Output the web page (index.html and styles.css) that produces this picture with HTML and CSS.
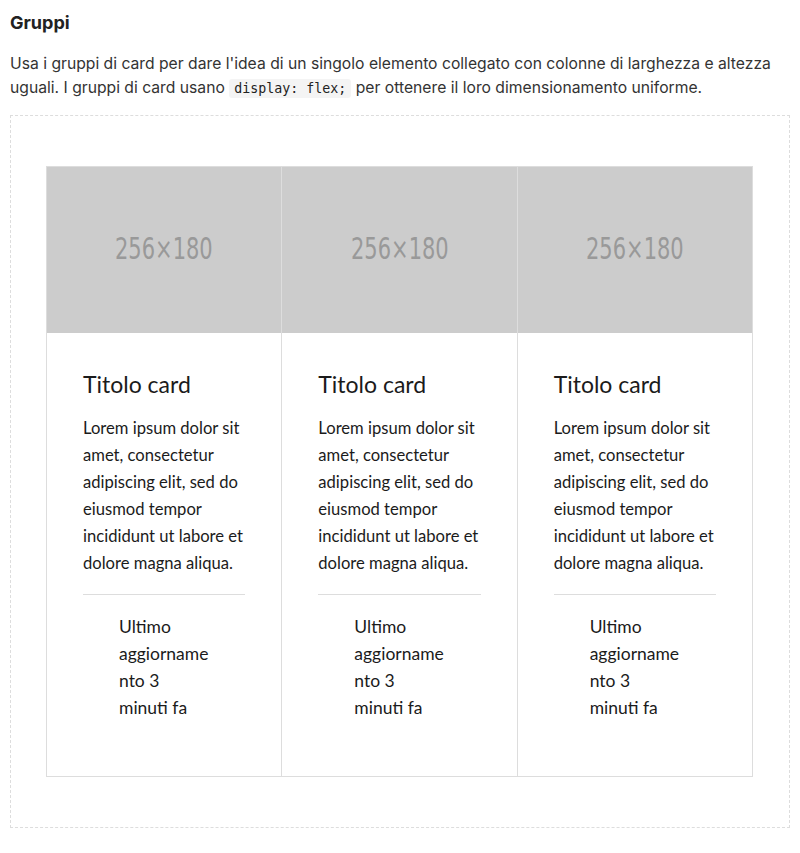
FILE: index.html
```html
<!DOCTYPE html>
<html lang="it">
<head>
<meta charset="utf-8">
<link rel="stylesheet" href="styles.css">
</head>
<body>
<h3 class="title">Gruppi</h3>
<p class="intro">Usa i gruppi di card per dare l'idea di un singolo elemento collegato con colonne di larghezza e altezza uguali. I gruppi di card usano <code>display: flex;</code> per ottenere il loro dimensionamento uniforme.</p>
<div class="example">
  <div class="card-group">
    <div class="card">
      <div class="card-img"><span>256×180</span></div>
      <div class="card-body">
        <h5 class="card-title">Titolo card</h5>
        <p class="card-text">Lorem ipsum dolor sit amet, consectetur adipiscing elit, sed do eiusmod tempor incididunt ut labore et dolore magna aliqua.</p>
        <div class="card-footer">Ultimo aggiornamento 3 minuti fa</div>
      </div>
    </div>
    <div class="card">
      <div class="card-img"><span>256×180</span></div>
      <div class="card-body">
        <h5 class="card-title">Titolo card</h5>
        <p class="card-text">Lorem ipsum dolor sit amet, consectetur adipiscing elit, sed do eiusmod tempor incididunt ut labore et dolore magna aliqua.</p>
        <div class="card-footer">Ultimo aggiornamento 3 minuti fa</div>
      </div>
    </div>
    <div class="card">
      <div class="card-img"><span>256×180</span></div>
      <div class="card-body">
        <h5 class="card-title">Titolo card</h5>
        <p class="card-text">Lorem ipsum dolor sit amet, consectetur adipiscing elit, sed do eiusmod tempor incididunt ut labore et dolore magna aliqua.</p>
        <div class="card-footer">Ultimo aggiornamento 3 minuti fa</div>
      </div>
    </div>
  </div>
</div>
</body>
</html>
```
FILE: styles.css
```css
html, body { margin: 0; padding: 0; background: #fff; }
body {
  padding: 10px 10px 0 10px;
  font-family: Inter, "Noto Sans", sans-serif;
  color: #333;
}
.title {
  margin: 2px 0 18px 0;
  font-size: 18px;
  font-weight: 700;
  line-height: 22px;
  color: #222;
}
.intro {
  margin: 0 0 14px 0;
  font-size: 15.7px;
  line-height: 24px;
  color: #333;
}
.intro code {
  font-family: "DejaVu Sans Mono", monospace;
  font-size: 13.3px;
  background: #f4f4f4;
  border-radius: 3px;
  padding: 2px 5px;
  color: #222;
}
.example {
  border: 1px dashed #ddd;
  padding: 50px 36px 50px 35px;
}
.card-group {
  display: flex;
  border: 1px solid #ddd;
}
.card {
  flex: 1 1 0;
  display: flex;
  flex-direction: column;
  border-left: 1px solid #ddd;
}
.card:first-child { border-left: none; }
.card-img {
  height: 166px;
  background: #ccc;
  display: flex;
  align-items: center;
  justify-content: center;
}
.card-img span {
  display: inline-block;
  font-family: "DejaVu Sans", sans-serif;
  font-size: 30px;
  color: #999;
  transform: scaleX(0.7);
  margin-top: -3px;
}
.card-body {
  padding: 36px 36px 36px 36px;
  font-family: Lato, "Open Sans", sans-serif;
  color: #1b1b1b;
}
.card-title {
  margin: 0 0 16px 0;
  font-size: 23px;
  font-weight: 400;
  line-height: 30px;
}
.card-text {
  margin: 0;
  font-size: 16.6px;
  line-height: 27px;
}
.card-footer {
  margin-top: 17px;
  border-top: 1px solid #ddd;
  padding: 18px 36px 19px 36px;
  font-size: 17.5px;
  line-height: 27px;
  overflow-wrap: anywhere;
}
```
